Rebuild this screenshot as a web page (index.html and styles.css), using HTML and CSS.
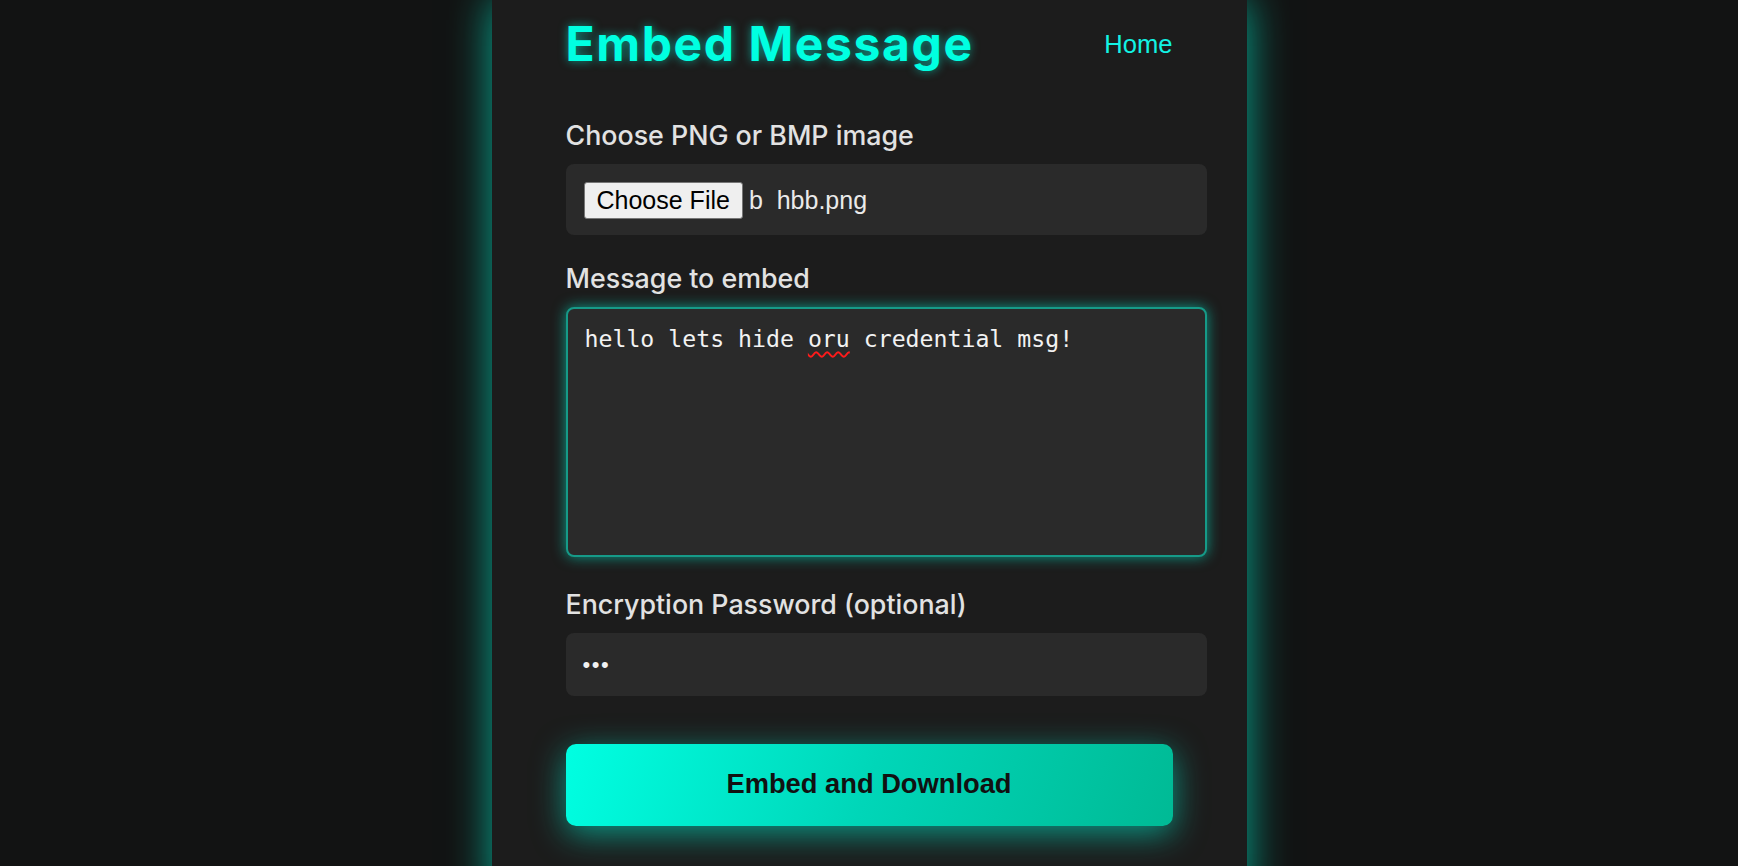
FILE: index.html
```html
<!DOCTYPE html>
<html lang="en">
<head>
<meta charset="utf-8">
<title>Embed Message</title>
<link rel="stylesheet" href="styles.css">
</head>
<body>
<main class="card">
  <header class="header">
    <h1 class="title">Embed Message</h1>
    <a class="home" href="#">Home</a>
  </header>
  <form class="form">
    <label class="label">Choose PNG or BMP image</label>
    <div class="box file-box">
      <span class="file-btn">Choose File</span>
      <span class="file-name">b  hbb.png</span>
    </div>

    <label class="label">Message to embed</label>
    <div class="box textarea">hello lets hide <span class="misspelled">oru</span> credential msg!</div>

    <label class="label">Encryption Password (optional)</label>
    <div class="box password"><span class="dots">&#8226;&#8226;&#8226;</span></div>

    <button class="submit" type="button">Embed and Download</button>
  </form>
</main>
</body>
</html>
```

FILE: styles.css
```css
html, body {
  margin: 0;
  padding: 0;
}

body {
  background: #121313;
  height: 866px;
  overflow: hidden;
  display: flex;
  justify-content: center;
  font-family: "Inter", "Liberation Sans", sans-serif;
}

.card {
  width: 755px;
  box-sizing: border-box;
  padding: 14px 74px 0 74px;
  background: #1c1c1c;
  min-height: 900px;
  box-shadow: 0 0 40px rgba(0, 220, 190, 0.75);
}

.header {
  display: flex;
  justify-content: space-between;
  align-items: flex-start;
  margin-bottom: 46px;
}

.title {
  margin: 0;
  font-family: "Inter", sans-serif;
  font-weight: 700;
  font-size: 48px;
  line-height: 60px;
  letter-spacing: 1.6px;
  color: #00ffe1;
  text-shadow: 0 0 10px rgba(0, 255, 225, 0.55);
}

.home {
  margin-top: 15px;
  font-family: "Liberation Sans", Arial, sans-serif;
  font-size: 25.6px;
  line-height: 30px;
  color: #12f3e4;
  text-decoration: none;
}

.form {
  display: flex;
  flex-direction: column;
  align-items: flex-start;
}

.label {
  display: block;
  font-size: 26.8px;
  font-weight: 500;
  line-height: 30px;
  color: #e2e2e2;
  margin-bottom: 14px;
}

.box {
  width: 100%;
  background: #2a2a2a;
  border-radius: 8px;
  color: #f2f2f2;
}

.file-box {
  box-sizing: content-box;
  padding: 18px 16px 17px 18px;
  height: 36px;
  display: flex;
  align-items: center;
  margin-bottom: 28px;
  font-family: "Liberation Sans", Arial, sans-serif;
}

.file-btn {
  box-sizing: border-box;
  height: 37px;
  padding: 0 12px 0 12px;
  display: flex;
  align-items: center;
  background: #efefef;
  border: 1px solid #767676;
  border-radius: 3px;
  color: #000;
  font-size: 25px;
}

.file-name {
  margin-left: 6px;
  white-space: pre;
  font-size: 25px;
  color: #eaeaea;
}

.textarea {
  box-sizing: border-box;
  width: 641px;
  height: 250px;
  padding: 16px 17px;
  border: 2px solid #169a88;
  box-shadow: 0 0 14px rgba(0, 235, 205, 0.6);
  font-family: "DejaVu Sans Mono", "Liberation Mono", monospace;
  font-size: 23.2px;
  line-height: 27px;
  color: #f2f2f2;
  margin-bottom: 32px;
}

.misspelled {
  text-decoration: underline wavy #ff1a1a;
  text-decoration-thickness: 1.5px;
  text-underline-offset: 4px;
}

.password {
  box-sizing: border-box;
  width: 641px;
  height: 63px;
  padding: 0 17px;
  display: flex;
  align-items: center;
  margin-bottom: 48px;
}

.dots {
  font-family: "Liberation Sans", Arial, sans-serif;
  font-size: 22px;
  letter-spacing: 1.5px;
  color: #f2f2f2;
}

.submit {
  width: 607px;
  height: 82px;
  border: none;
  border-radius: 10px;
  background: linear-gradient(110deg, #00ffe2 0%, #00d6b8 50%, #00ba95 100%);
  box-shadow: 0 8px 32px rgba(0, 230, 200, 0.6);
  font-family: "Liberation Sans", Arial, sans-serif;
  font-weight: 700;
  font-size: 27.3px;
  padding-bottom: 3px;
  color: #111;
  cursor: pointer;
}
```
